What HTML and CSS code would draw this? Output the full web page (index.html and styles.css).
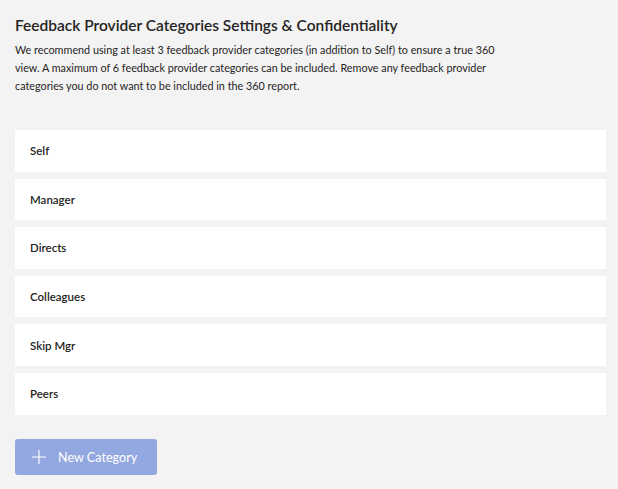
FILE: index.html
```html
<!DOCTYPE html>
<html>
<head>
<meta charset="utf-8">
<link rel="stylesheet" href="styles.css">
</head>
<body>
<div class="page">
  <h1 class="title">Feedback Provider Categories Settings &amp; Confidentiality</h1>
  <p class="desc">We recommend using at least 3 feedback provider categories (in addition to Self) to ensure a true 360 view. A maximum of 6 feedback provider categories can be included. Remove any feedback provider categories you do not want to be included in the 360 report.</p>
  <div class="list">
    <div class="row">Self</div>
    <div class="row">Manager</div>
    <div class="row">Directs</div>
    <div class="row">Colleagues</div>
    <div class="row">Skip Mgr</div>
    <div class="row">Peers</div>
  </div>
  <button class="btn" type="button">
    <svg class="plus" width="14" height="14" viewBox="0 0 14 14"><path d="M7 0v14M0 7h14" stroke="#fff" stroke-width="1.1" fill="none"/></svg>
    <span>New Category</span>
  </button>
</div>
</body>
</html>
```
FILE: styles.css
```css
html, body {
  margin: 0;
  padding: 0;
  background: #f3f3f3;
}
body {
  font-family: "Lato", "Noto Sans", sans-serif;
  color: #252423;
}
.page {
  padding: 13px 12px 0 15px;
  display: flex;
  flex-direction: column;
  align-items: flex-start;
}
.title {
  margin: 0;
  font-size: 15.5px;
  font-weight: 600;
  line-height: 24px;
}
.desc {
  margin: 4px 0 0 0;
  font-size: 10.8px;
  line-height: 18px;
  width: 490px;
}
.list {
  align-self: stretch;
  margin-top: 35px;
  display: flex;
  flex-direction: column;
  gap: 7px;
}
.row {
  background: #fff;
  height: 41.6px;
  display: flex;
  align-items: center;
  padding-left: 15px;
  font-size: 11.5px;
  font-weight: 600;
}
.btn {
  margin-top: 24.5px;
  width: 142px;
  height: 36px;
  border: none;
  border-radius: 3px;
  background: #93a8e0;
  color: #fff;
  display: flex;
  align-items: center;
  gap: 12px;
  padding: 0 0 0 17px;
  font-family: inherit;
  font-size: 12.6px;
  font-weight: 400;
}
```
